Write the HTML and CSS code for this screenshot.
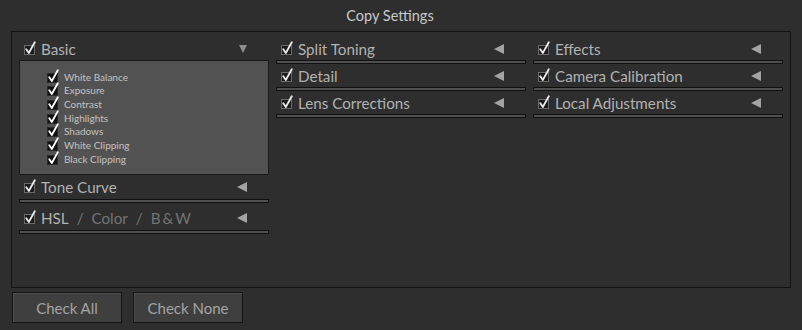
FILE: index.html
```html
<!DOCTYPE html>
<html lang="en">
<head>
  <meta charset="UTF-8" />
  <title>Copy Settings</title>
  <link rel="stylesheet" href="styles.css">
</head>
<body>

  <div class="dialog">
    <h1 class="title">Copy Settings</h1>

    <div class="panel">
      <div class="column">
        <div class="group-head">
          <svg class="check" viewBox="0 0 12 14"><rect x="0.5" y="4.5" width="10" height="9" /><path d="M2.3 8.2 L4.8 12 L10.8 1.2" /></svg>
          <span class="label">Basic</span>
          <span class="arrow down"></span>
        </div>
        <ul class="sub-list">
          <li><svg class="check small" viewBox="0 0 12 14"><rect x="0.5" y="4.5" width="10" height="9" /><path d="M2.3 8.2 L4.8 12 L10.8 1.2" /></svg>White Balance</li>
          <li><svg class="check small" viewBox="0 0 12 14"><rect x="0.5" y="4.5" width="10" height="9" /><path d="M2.3 8.2 L4.8 12 L10.8 1.2" /></svg>Exposure</li>
          <li><svg class="check small" viewBox="0 0 12 14"><rect x="0.5" y="4.5" width="10" height="9" /><path d="M2.3 8.2 L4.8 12 L10.8 1.2" /></svg>Contrast</li>
          <li><svg class="check small" viewBox="0 0 12 14"><rect x="0.5" y="4.5" width="10" height="9" /><path d="M2.3 8.2 L4.8 12 L10.8 1.2" /></svg>Highlights</li>
          <li><svg class="check small" viewBox="0 0 12 14"><rect x="0.5" y="4.5" width="10" height="9" /><path d="M2.3 8.2 L4.8 12 L10.8 1.2" /></svg>Shadows</li>
          <li><svg class="check small" viewBox="0 0 12 14"><rect x="0.5" y="4.5" width="10" height="9" /><path d="M2.3 8.2 L4.8 12 L10.8 1.2" /></svg>White Clipping</li>
          <li><svg class="check small" viewBox="0 0 12 14"><rect x="0.5" y="4.5" width="10" height="9" /><path d="M2.3 8.2 L4.8 12 L10.8 1.2" /></svg>Black Clipping</li>
        </ul>
        <div class="group-head tone">
          <svg class="check" viewBox="0 0 12 14"><rect x="0.5" y="4.5" width="10" height="9" /><path d="M2.3 8.2 L4.8 12 L10.8 1.2" /></svg>
          <span class="label">Tone Curve</span>
          <span class="arrow"></span>
        </div>
        <div class="bar"></div>
        <div class="group-head hsl">
          <svg class="check" viewBox="0 0 12 14"><rect x="0.5" y="4.5" width="10" height="9" /><path d="M2.3 8.2 L4.8 12 L10.8 1.2" /></svg>
          <span class="label">HSL<span class="dim slash">/</span><span class="dim">Color</span><span class="dim slash">/</span><span class="dim">B&thinsp;&amp;&thinsp;W</span></span>
          <span class="arrow"></span>
        </div>
        <div class="bar"></div>
      </div>

      <div class="column">
        <div class="group-head">
          <svg class="check" viewBox="0 0 12 14"><rect x="0.5" y="4.5" width="10" height="9" /><path d="M2.3 8.2 L4.8 12 L10.8 1.2" /></svg>
          <span class="label">Split Toning</span>
          <span class="arrow"></span>
        </div>
        <div class="bar"></div>
        <div class="group-head">
          <svg class="check" viewBox="0 0 12 14"><rect x="0.5" y="4.5" width="10" height="9" /><path d="M2.3 8.2 L4.8 12 L10.8 1.2" /></svg>
          <span class="label">Detail</span>
          <span class="arrow"></span>
        </div>
        <div class="bar"></div>
        <div class="group-head">
          <svg class="check" viewBox="0 0 12 14"><rect x="0.5" y="4.5" width="10" height="9" /><path d="M2.3 8.2 L4.8 12 L10.8 1.2" /></svg>
          <span class="label">Lens Corrections</span>
          <span class="arrow"></span>
        </div>
        <div class="bar"></div>
      </div>

      <div class="column">
        <div class="group-head">
          <svg class="check" viewBox="0 0 12 14"><rect x="0.5" y="4.5" width="10" height="9" /><path d="M2.3 8.2 L4.8 12 L10.8 1.2" /></svg>
          <span class="label">Effects</span>
          <span class="arrow"></span>
        </div>
        <div class="bar"></div>
        <div class="group-head">
          <svg class="check" viewBox="0 0 12 14"><rect x="0.5" y="4.5" width="10" height="9" /><path d="M2.3 8.2 L4.8 12 L10.8 1.2" /></svg>
          <span class="label">Camera Calibration</span>
          <span class="arrow"></span>
        </div>
        <div class="bar"></div>
        <div class="group-head">
          <svg class="check" viewBox="0 0 12 14"><rect x="0.5" y="4.5" width="10" height="9" /><path d="M2.3 8.2 L4.8 12 L10.8 1.2" /></svg>
          <span class="label">Local Adjustments</span>
          <span class="arrow"></span>
        </div>
        <div class="bar"></div>
      </div>
    </div>

    <div class="actions">
      <button class="btn">Check All</button>
      <button class="btn">Check None</button>
    </div>
  </div>

</body>
</html>
```

FILE: styles.css
```css
body {
  margin: 0;
  background: #2e2e2e;
  font-family: 'Lato', 'Liberation Sans', sans-serif;
  width: 802px;
  height: 330px;
  overflow: hidden;
}

.dialog {
  padding: 0 11px;
}

.title {
  margin: 0;
  height: 31px;
  line-height: 32px;
  font-size: 14.5px;
  font-weight: normal;
  color: #c9c9c9;
  text-align: center;
  padding-right: 22px;
}

.panel {
  box-sizing: border-box;
  width: 780px;
  height: 257px;
  border: 1px solid #121212;
  padding: 5px 7px 0;
  display: flex;
  gap: 7px;
}

.column {
  width: 250px;
  display: flex;
  flex-direction: column;
}

.group-head {
  height: 23px;
  display: flex;
  align-items: center;
  padding-left: 5px;
  padding-right: 22px;
}

.group-head.tone {
  height: 24px;
}

.group-head.hsl {
  height: 27px;
  padding-top: 2px;
  box-sizing: border-box;
}

.check {
  width: 12px;
  height: 14px;
  flex: none;
  margin-top: -2px;
}

.check rect {
  fill: #1b1b1b;
  stroke: #6a6a6a;
  stroke-width: 1;
}

.check path {
  fill: none;
  stroke: #ececec;
  stroke-width: 1.8;
  stroke-linecap: round;
  stroke-linejoin: round;
}

.check.small rect {
  fill: #111;
  stroke: #2a2a2a;
}

.check.small path {
  stroke: #fff;
}

.label {
  margin-left: 5px;
  font-size: 15.2px;
  color: #b2b2b2;
  white-space: nowrap;
}

.dim {
  color: #747474;
}

.slash {
  margin: 0 8px;
}

.arrow {
  margin-left: auto;
  width: 0;
  height: 0;
  border-top: 5px solid transparent;
  border-bottom: 5px solid transparent;
  border-right: 10px solid #a3a3a3;
}

.arrow.down {
  border-top: 8px solid #8c8c8c;
  border-left: 4.5px solid transparent;
  border-right: 4.5px solid transparent;
  border-bottom: 0;
  margin-top: 1px;
}

.bar {
  height: 2px;
  border: 1px solid #101010;
  background: #4f4f4f;
}

.sub-list {
  list-style: none;
  margin: 0;
  height: 115px;
  box-sizing: border-box;
  padding: 9px 0 0 27px;
  background: #525252;
  border: 1px solid #1a1a1a;
}

.sub-list li {
  height: 13.67px;
  display: flex;
  align-items: center;
  font-size: 10px;
  color: #c2c2c2;
}

.sub-list .check {
  margin-right: 5px;
}

.actions {
  display: flex;
  gap: 11px;
  margin-top: 4px;
  padding-left: 1px;
}

.btn {
  width: 110px;
  height: 31px;
  background: #3f3f3f;
  border: 1px solid #141414;
  box-shadow: inset 1px 1px 0 #4e4e4e;
  color: #a3a3a3;
  font-family: 'Lato', 'Liberation Sans', sans-serif;
  font-size: 15px;
  padding: 0;
}
```
